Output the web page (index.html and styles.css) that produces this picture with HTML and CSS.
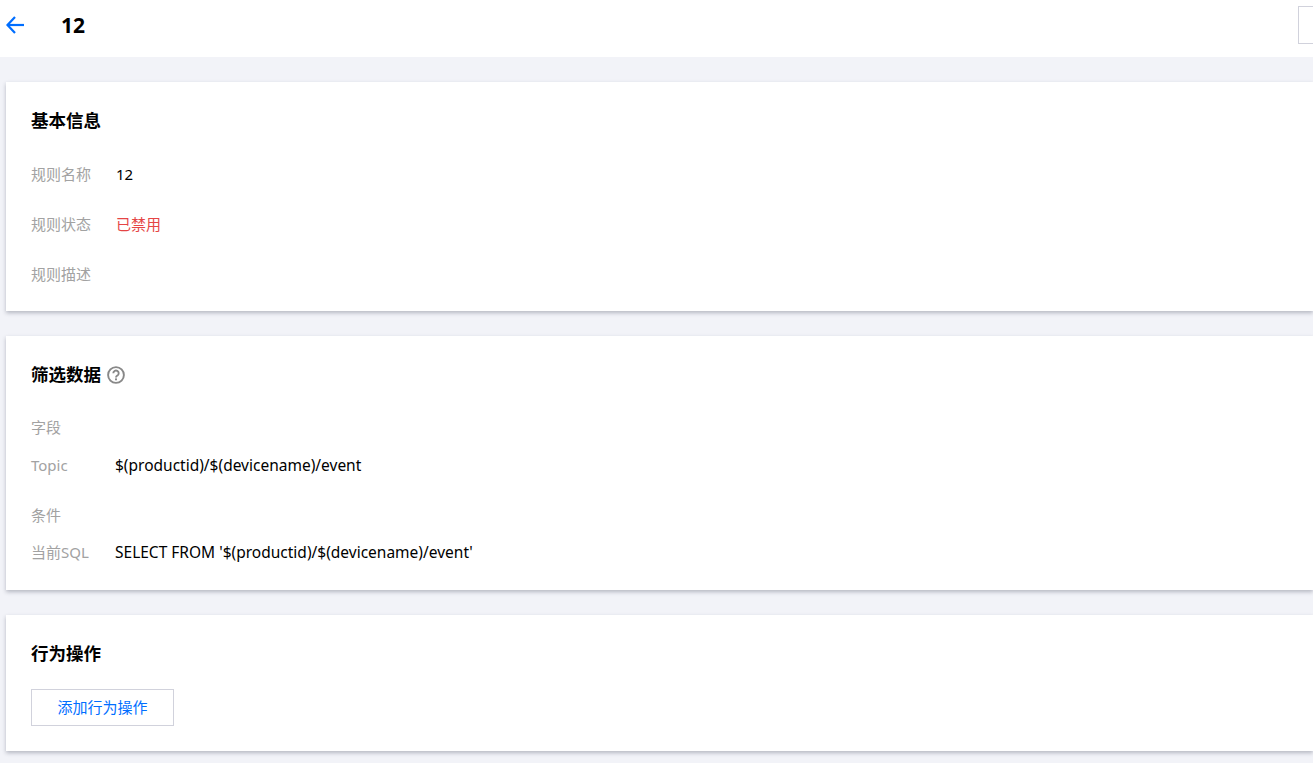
FILE: index.html
```html
<!DOCTYPE html>
<html lang="zh-CN">
<head>
<meta charset="utf-8">
<title>12</title>
<link rel="stylesheet" href="styles.css">
</head>
<body>
<header class="topbar">
  <svg class="back" width="20" height="20" viewBox="0 0 20 20" fill="none" stroke="#006eff" stroke-width="2.2"><path d="M19 10H2.5"/><path d="M10 2L2.5 10l7.5 8"/></svg>
  <h1 class="page-title">12</h1>
  <div class="top-btn"></div>
</header>
<main class="content">
  <section class="card card-basic">
    <h2 class="card-title">基本信息</h2>
    <div class="info-row"><span class="label">规则名称</span><span class="value">12</span></div>
    <div class="info-row"><span class="label">规则状态</span><span class="value danger">已禁用</span></div>
    <div class="info-row"><span class="label">规则描述</span><span class="value"></span></div>
  </section>
  <section class="card card-filter">
    <h2 class="card-title">筛选数据
      <svg class="help" width="18" height="18" viewBox="0 0 18 18" fill="none"><circle cx="9" cy="9" r="7.9" stroke="#888" stroke-width="1.9"/><path d="M6.3 7.3a2.7 2.7 0 1 1 4.2 2.2c-1 .7-1.5 1-1.5 2" stroke="#888" stroke-width="1.9"/><rect x="8" y="12.4" width="2" height="1.9" fill="#888"/></svg>
    </h2>
    <div class="sub-label">字段</div>
    <div class="data-row data-topic"><span class="label">Topic</span><span class="value">$(productid)/$(devicename)/event</span></div>
    <div class="sub-label sub-cond">条件</div>
    <div class="data-row"><span class="label">当前SQL</span><span class="value">SELECT FROM '$(productid)/$(devicename)/event'</span></div>
  </section>
  <section class="card card-action">
    <h2 class="card-title">行为操作</h2>
    <button class="add-btn" type="button">添加行为操作</button>
  </section>
</main>
</body>
</html>
```
FILE: styles.css
```css
* { box-sizing: border-box; }
html, body { margin: 0; height: 100%; overflow: hidden; }
body {
  background: #f2f3f8;
  color: #000;
  font-family: "Noto Sans", "Noto Sans CJK SC", sans-serif;
  font-size: 15px;
}
.topbar {
  height: 57px;
  background: #fff;
  display: flex;
  align-items: center;
  padding: 0 0 7px 5px;
  position: relative;
  overflow: hidden;
}
.back { flex: none; }
.page-title {
  margin: 0 0 0 36px;
  font-size: 21px;
  line-height: 28px;
  font-weight: 700;
  flex: 1;
}
.top-btn {
  width: 40px;
  height: 38px;
  margin-right: -25px;
  border: 1px solid #d1d2dc;
  background: #fff;
  flex: none;
}
.content {
  padding: 25px 0 0 6px;
  display: flex;
  flex-direction: column;
  gap: 25px;
}
.card {
  background: #fff;
  box-shadow: 0 2px 4px rgba(54, 58, 80, .32);
  padding: 25px;
}
.card-basic { height: 229px; }
.card-filter { height: 254px; }
.card-action { height: 136px; }
.card-title {
  margin: 0;
  font-size: 17.5px;
  line-height: 26px;
  font-weight: 700;
  display: flex;
  align-items: center;
  gap: 6px;
}
.help { margin-top: 2px; }
.label { color: #a2a2a2; width: 85px; flex: none; }
.info-row {
  display: flex;
  line-height: 22px;
  margin-top: 28px;
}
.card-title + .info-row { margin-top: 30px; }
.danger { color: #e54545; }
.sub-label { color: #a2a2a2; line-height: 22px; margin-top: 29px; }
.sub-cond { margin-top: 28px; }
.data-row { display: flex; line-height: 22px; margin-top: 15px; }
.data-topic { margin-top: 16px; }
.data-row .label { width: 84px; }
.data-row .value { font-size: 15.5px; }
.add-btn {
  display: block;
  margin-top: 23px;
  width: 143px;
  height: 37px;
  background: #fff;
  border: 1px solid #d1d2dc;
  color: #006eff;
  font: inherit;
  padding: 0 0 2px;
}
```
